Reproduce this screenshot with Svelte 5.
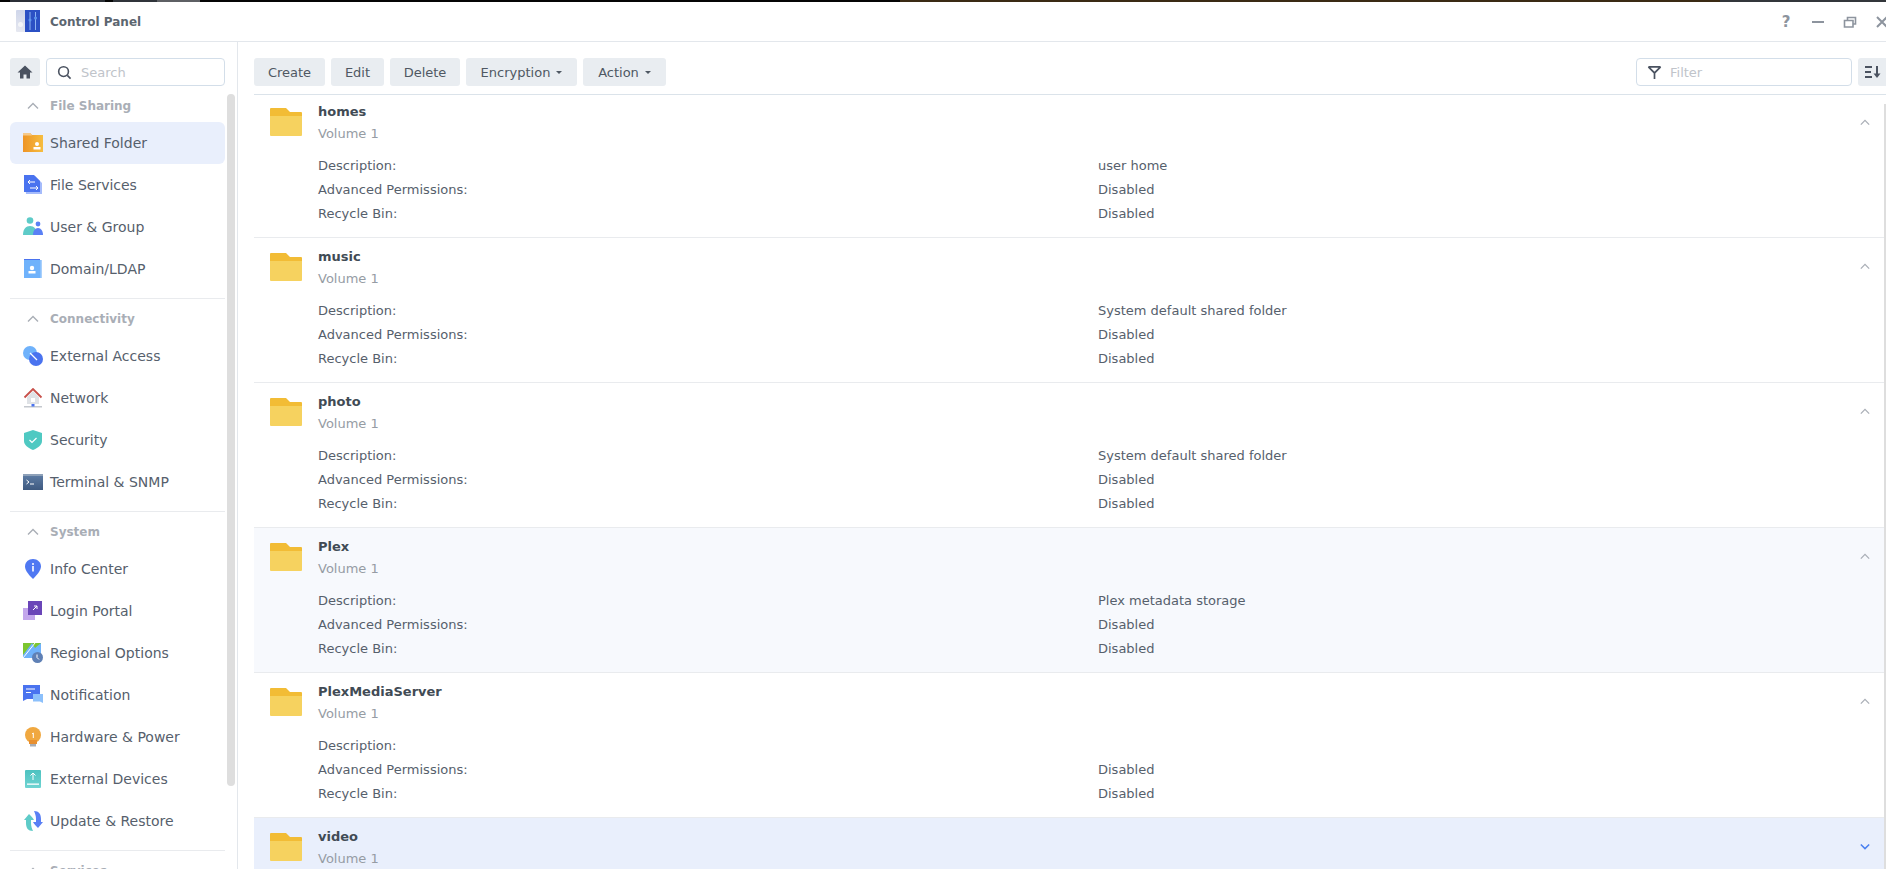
<script>
  const sections = [
    { title: 'File Sharing', items: [['Shared Folder','shared'],['File Services','files'],['User & Group','user'],['Domain/LDAP','ldap']] },
    { title: 'Connectivity', items: [['External Access','ext'],['Network','net'],['Security','sec'],['Terminal & SNMP','term']] },
    { title: 'System', items: [['Info Center','info'],['Login Portal','login'],['Regional Options','region'],['Notification','notif'],['Hardware & Power','hw'],['External Devices','dev'],['Update & Restore','upd']] },
    { title: 'Services', items: [] }
  ];
  const folders = [
    { name: 'homes', desc: 'user home' },
    { name: 'music', desc: 'System default shared folder' },
    { name: 'photo', desc: 'System default shared folder' },
    { name: 'Plex', desc: 'Plex metadata storage', hover: true },
    { name: 'PlexMediaServer', desc: '' },
    { name: 'video', desc: '', selected: true }
  ];
</script>

<div class="win">
  <div class="strip"></div>
  <header class="titlebar">
    <svg class="appicon" viewBox="0 0 24 24" width="24" height="24">
      <defs>
        <linearGradient id="gl" x1="0" y1="0" x2="0" y2="1"><stop offset="0" stop-color="#cfd6ea"/><stop offset="1" stop-color="#e6e8f0"/></linearGradient>
      </defs>
      <rect x="0" y="0" width="24" height="22" rx="1" fill="url(#gl)"/>
      <rect x="9" y="0" width="15" height="22" fill="#2b50c4"/>
      <circle cx="4.500" cy="14.500" r="2.500" fill="#f4f5f8"/>
      <path d="M14 2v18M19.500 2v18" stroke="#8fb4f2" stroke-width="1"/>
      <circle cx="14" cy="10" r="1.500" fill="#5f97ee"/><circle cx="19.500" cy="8" r="1.500" fill="#5f97ee"/>
    </svg>
    <span class="apptitle">Control Panel</span>
    <div class="winbtns">
      <span class="q">?</span>
      <svg viewBox="0 0 14 14" width="14" height="14"><path d="M1 7h12" stroke="#8d949e" stroke-width="2"/></svg>
      <svg viewBox="0 0 14 14" width="14" height="14"><path d="M1.500 5.500h8.500v6.500H1.500zM4.500 5V2.500h8V9H10.500" fill="none" stroke="#8d949e" stroke-width="1.600"/></svg>
      <svg viewBox="0 0 14 14" width="14" height="14"><path d="M2 2l10 10M12 2L2 12" stroke="#8d949e" stroke-width="2"/></svg>
    </div>
  </header>

  <div class="body">
    <aside class="side">
      <div class="sidetop">
        <button class="home" aria-label="Home">
          <svg viewBox="0 0 16 16" width="16" height="16"><path d="M8 1.500L0.500 8.500H3V14.500H6.500V10.500H9.500V14.500H13V8.500H15.500Z" fill="#4a5260"/></svg>
        </button>
        <div class="input search">
          <svg viewBox="0 0 16 16" width="15" height="15"><circle cx="7" cy="7" r="5.200" fill="none" stroke="#4a5260" stroke-width="1.700"/><path d="M11 11l3.500 3.500" stroke="#4a5260" stroke-width="1.700"/></svg>
          <span>Search</span>
        </div>
      </div>
      <div class="navwrap">
        <nav class="nav">
          {#each sections as s, i}
            <div class="sec" class:ruled={i > 0}>
              <div class="sechead">
                <svg viewBox="0 0 12 8" width="12" height="8"><path d="M1 6.500L6 1.500L11 6.500" fill="none" stroke="#a9aeb6" stroke-width="1.400"/></svg>
                <span>{s.title}</span>
              </div>
              {#each s.items as [label, ic]}
                <div class="item" class:active={ic === 'shared'}>
                  <svg class="ic" viewBox="0 0 20 20" width="20" height="20">
                    <defs>
                      <linearGradient id="g-{ic}a" x1="0" y1="0" x2="1" y2="0"><stop offset="0" stop-color="#ee9425"/><stop offset="1" stop-color="#f6bd40"/></linearGradient>
                      <linearGradient id="g-{ic}b" x1="0" y1="0" x2="0" y2="1"><stop offset="0" stop-color="#5f7ea6"/><stop offset="1" stop-color="#3f5a80"/></linearGradient>
                      <linearGradient id="g-{ic}c" x1="0" y1="0" x2="0" y2="1"><stop offset="0" stop-color="#4dc2c0"/><stop offset="1" stop-color="#70d4d2"/></linearGradient>
                    </defs>
                    {#if ic === 'shared'}
                      <path d="M0 0h7l2 2h11v17H0z" fill="url(#g-{ic}a)"/><path d="M0 0h7l2 2.500H0z" fill="#f6c98a"/><circle cx="14" cy="11" r="2" fill="#fff"/><rect x="10.500" y="14" width="7" height="2.500" fill="#fff"/>
                    {:else if ic === 'files'}
                      <path d="M1 1h11l7 7v11H3z" fill="#a5bbfb"/><path d="M1 0h10l6 6v11H1z" fill="#4a73ef"/><path d="M5 7h7M5 7l2-2M5 7l2 2M7 13h8M15 13l-2-2M15 13l-2 2" stroke="#fff" stroke-width="1" fill="none"/>
                    {:else if ic === 'user'}
                      <circle cx="7" cy="3.500" r="3.300" fill="#5ecbc8"/><path d="M0 18c0-6 3-9 7-9s7 3 7 9z" fill="#5ecbc8"/><circle cx="15" cy="7" r="2.400" fill="#5a80f5"/><path d="M10 18c0-4 2-7 5-7s5 3 5 7z" fill="#5a80f5"/>
                    {:else if ic === 'ldap'}
                      <rect x="1" y="0" width="16" height="18" fill="#4a73ef"/><rect x="1" y="1" width="18" height="18" fill="#a9d0fc"/><rect x="1" y="1" width="16.500" height="18" fill="#6fb2fb"/><circle cx="9" cy="9" r="2.200" fill="#fff"/><rect x="5.500" y="12" width="7" height="2.500" fill="#fff"/>
                    {:else if ic === 'ext'}
                      <circle cx="7" cy="7" r="7" fill="#6fb2fb"/><circle cx="13" cy="13" r="7" fill="#4a73ef"/><path d="M7 7l7 7" stroke="#fff" stroke-width="1.200"/>
                    {:else if ic === 'net'}
                      <path d="M1.500 9.500L10 1l8.500 8.500" fill="none" stroke="#c8504a" stroke-width="1.800"/><path d="M4 9l6-6 6 6v7H4z" fill="#dfe2e6"/><rect x="8" y="10" width="4" height="4" fill="#fff"/><rect x="1" y="18" width="18" height="1.500" fill="#c4c8ce"/><rect x="8.500" y="16" width="3" height="2.500" fill="#4a73ef"/>
                    {:else if ic === 'sec'}
                      <path d="M10 0l9 3v8c0 4-4 7-9 9-5-2-9-5-9-9V3z" fill="#4fc9c2"/><path d="M6.500 10l2.500 2.500 4.500-4.500" fill="none" stroke="#fff" stroke-width="1.200"/>
                    {:else if ic === 'term'}
                      <rect x="0" y="2" width="20" height="16" fill="url(#g-{ic}b)"/><rect x="0" y="2" width="20" height="2" fill="#8ea1b9"/><path d="M3.500 8l2.500 2-2.500 2M7 12h4" fill="none" stroke="#fff" stroke-width="1"/>
                    {:else if ic === 'info'}
                      <path d="M10 0c4.500 0 8 3.300 8 7.500S13 17 10 20C7 17 2 12 2 7.500S5.500 0 10 0z" fill="#4f78f2"/><rect x="9.200" y="7" width="1.600" height="5.500" fill="#fff"/><circle cx="10" cy="5" r="1" fill="#fff"/>
                    {:else if ic === 'login'}
                      <rect x="0" y="7" width="12" height="12" fill="#c3a6ec"/><rect x="5" y="0" width="14" height="14" fill="#6a45b8"/><path d="M10 9l4-4M11 5h3v3" fill="none" stroke="#fff" stroke-width="1"/>
                    {:else if ic === 'region'}
                      <path d="M0 0h18v15H0z" fill="#6fb2fb"/><path d="M0 0h9L0 12z" fill="#7cc52f"/><path d="M9 0L18 0 12 5z" fill="#7cc52f"/><path d="M0 15L12 0" stroke="#fff" stroke-width="1"/><circle cx="14.500" cy="14.500" r="5.500" fill="#5f80b5"/><path d="M14 11.500v3l2 2" stroke="#fff" stroke-width="1" fill="none"/>
                    {:else if ic === 'notif'}
                      <path d="M0 0h17v14H4l-4 2z" fill="#4a73ef"/><path d="M3 4h9M3 7.500h5" stroke="#fff" stroke-width="1"/><path d="M10 9h10v9l-3-1.500h-7z" fill="#8cc0fb"/>
                    {:else if ic === 'hw'}
                      <circle cx="10" cy="8" r="8" fill="#f0a840"/><rect x="6" y="13" width="8" height="4" fill="#e89030"/><rect x="7" y="17" width="6" height="2.500" fill="#a8adb5"/><path d="M9 7l1.300-1v5" fill="none" stroke="#fff" stroke-width="1"/>
                    {:else if ic === 'dev'}
                      <rect x="2" y="1" width="16" height="18" rx="1" fill="url(#g-{ic}c)"/><path d="M10 11V4M7.500 6.500L10 4l2.500 2.500" fill="none" stroke="#fff" stroke-width="1"/><rect x="4" y="14.500" width="12" height="1.300" fill="#fff"/>
                    {:else if ic === 'upd'}
                      <path d="M11 0c5 0 7 3 7 8v3h2l-5 6c-2-2-4-4-5-6h3V8c0-3-1-6-2-8z" fill="#5a80f5"/><path d="M10 20c-5 0-7-3-7-8V9H1l5-6c2 2 4 4 5 6H8v3c0 3 1 6 2 8z" fill="#5ecbc8"/>
                    {/if}
                  </svg>
                  <span>{label}</span>
                </div>
              {/each}
            </div>
          {/each}
        </nav>
        <div class="sidebar-thumb"></div>
      </div>
    </aside>

    <main class="main">
      <div class="toolbar">
        <button class="btn w-create">Create</button>
        <button class="btn w-edit">Edit</button>
        <button class="btn w-delete">Delete</button>
        <button class="btn w-enc">Encryption<i class="caret"></i></button>
        <button class="btn w-action">Action<i class="caret"></i></button>
        <div class="input filter">
          <svg viewBox="0 0 16 16" width="15" height="15"><path d="M1.500 2h13M1.500 2L8 8.500 14.500 2M8 8.500V15" fill="none" stroke="#4a5260" stroke-width="1.800"/></svg>
          <span>Filter</span>
        </div>
        <button class="sort" aria-label="Sort">
          <svg viewBox="0 0 16 14" width="16" height="14"><path d="M0 2h7M0 7h6M0 12h7" stroke="#4a5260" stroke-width="1.800"/><path d="M12 1v9" stroke="#4a5260" stroke-width="2"/><path d="M8.500 8.500h7L12 13z" fill="#4a5260"/></svg>
        </button>
      </div>
      <div class="list">
        {#each folders as f, i}
          <section class="row" class:first={i === 0} class:hover={f.hover} class:sel={f.selected}>
            <svg class="folder" viewBox="0 0 32 28" width="32" height="28">
              <path d="M0 1a1 1 0 0 1 1-1h15l4 4h11a1 1 0 0 1 1 1V9H0z" fill="#f2bc35"/>
              <path d="M0 8h32v19a1 1 0 0 1-1 1H1a1 1 0 0 1-1-1z" fill="#f6d25f"/>
            </svg>
            <div class="info">
              <div class="name">{f.name}</div>
              <div class="vol">Volume 1</div>
              <dl class="props">
                <dt>Description:</dt><dd>{f.desc}</dd>
                <dt>Advanced Permissions:</dt><dd>Disabled</dd>
                <dt>Recycle Bin:</dt><dd>Disabled</dd>
              </dl>
            </div>
            <svg class="chev" viewBox="0 0 12 8" width="10" height="7">
              {#if f.selected}
                <path d="M1 1.500L6 6.500L11 1.500" fill="none" stroke="#4a80f0" stroke-width="1.800"/>
              {:else}
                <path d="M1 6.500L6 1.500L11 6.500" fill="none" stroke="#a9aeb6" stroke-width="1.500"/>
              {/if}
            </svg>
          </section>
        {/each}
        <div class="list-thumb"></div>
      </div>
    </main>
  </div>
</div>

<style>
  :global(body) { margin: 0; overflow: hidden; background: #fff; }
  .win { width: 1886px; height: 869px; display: flex; flex-direction: column; overflow: hidden; font-family: "DejaVu Sans", sans-serif; font-size: 13px; color: #414b55; background: #fff; }
  .strip { height: 2px; flex: none; background: linear-gradient(to right, #050505 0 10px, #2b2f36 10px 105px, #050505 105px 113px, #30343a 113px 157px, #5e6064 157px 200px, #050505 200px 900px, #3a2a14 900px 1720px, #33363b 1720px); }
  .titlebar { height: 39px; flex: none; display: flex; align-items: center; padding-left: 16px; border-bottom: 1px solid #e3e7ec; box-sizing: content-box; }
  .appicon { margin-right: 10px; }
  .apptitle { font-weight: 700; font-size: 12px; color: #5c6670; }
  .winbtns { margin-left: auto; display: flex; align-items: center; gap: 18px; margin-right: -3px; }
  .q { font-size: 15px; font-weight: 700; color: #8d949e; width: 14px; text-align: center; }
  .body { flex: 1; min-height: 0; display: flex; }
  .side { width: 238px; flex: none; border-right: 1px solid #e3e7ec; display: flex; flex-direction: column; min-height: 0; padding-left: 10px; box-sizing: border-box; }
  .sidetop { display: flex; gap: 6px; padding-top: 16px; height: 28px; flex: none; width: 215px; box-sizing: content-box; }
  .home { width: 30px; height: 28px; border: 0; border-radius: 3px; background: #e9edf1; display: flex; align-items: center; justify-content: center; padding: 0; }
  .input { border: 1px solid #d3dee9; border-radius: 4px; box-sizing: border-box; display: flex; align-items: center; color: #c0c4ca; background: #fff; }
  .search { width: 179px; height: 28px; padding-left: 10px; gap: 9px; }
  .navwrap { flex: 1; min-height: 0; position: relative; overflow: hidden; }
  .nav { width: 215px; }
  .sec.ruled { border-top: 1px solid #e9ebee; margin-top: 8px; }
  .sechead { height: 36px; box-sizing: border-box; padding: 3px 0 0 17px; display: flex; align-items: center; gap: 11px; color: #a9aeb6; font-weight: 700; font-size: 12px; }
  .item { height: 42px; display: flex; align-items: center; padding-left: 13px; gap: 7px; border-radius: 6px; font-size: 14px; color: #56606c; }
  .item.active { background: #e9effc; }
  .ic { flex: none; }
  .sidebar-thumb { position: absolute; left: 217px; top: 8px; width: 8px; height: 692px; background: #dedede; border-radius: 4px; }
  .main { flex: 1; min-width: 0; display: flex; flex-direction: column; padding-left: 16px; overflow: hidden; }
  .toolbar { height: 53px; flex: none; display: flex; align-items: flex-start; padding-top: 16px; gap: 6px; box-sizing: border-box; border-bottom: 1px solid #dbe3ea; }
  .btn { height: 28px; border: 0; border-radius: 3px; background: #e9edf1; font: inherit; color: #4f5863; padding: 0; display: flex; align-items: center; justify-content: center; gap: 6px; flex: none; }
  .w-create { width: 71px; }
  .w-edit { width: 53px; }
  .w-delete { width: 70px; }
  .w-enc { width: 111px; }
  .w-action { width: 83px; }
  .caret { width: 0; height: 0; border-left: 3.500px solid transparent; border-right: 3.500px solid transparent; border-top: 3px solid #4f5863; }
  .filter { margin-left: auto; width: 216px; height: 28px; padding-left: 10px; gap: 8px; flex: none; }
  .sort { width: 30px; height: 28px; border: 0; border-radius: 3px; background: #e9edf1; margin-right: -2px; padding: 0; display: flex; align-items: center; justify-content: center; flex: none; }
  .list { flex: 1; min-height: 0; overflow: hidden; position: relative; }
  .row { height: 145px; box-sizing: border-box; border-bottom: 1px solid #e9ebee; display: flex; padding: 9px 16px 0 16px; }
  .row.first { height: 143px; padding-top: 7px; }
  .row.hover { background: #f7f9fd; }
  .row.sel { background: #e9effc; }
  .folder { flex: none; margin-top: 6px; margin-right: 16px; }
  .info { flex: 1; min-width: 0; }
  .name { font-weight: 700; color: #414b55; line-height: 20px; }
  .vol { color: #969ca4; line-height: 20px; margin-top: 2px; }
  .props { margin: 9px 0 0; display: grid; grid-template-columns: 780px 1fr; grid-auto-rows: 24px; align-items: center; }
  dd { margin: 0; }
  dt, dd { color: #56606c; }
  .chev { flex: none; margin-top: 16px; }
  .row.first .chev { margin-top: 17px; }
  .list-thumb { position: absolute; right: 0; top: 9px; width: 2px; bottom: 0; background: #dedede; }
</style>
